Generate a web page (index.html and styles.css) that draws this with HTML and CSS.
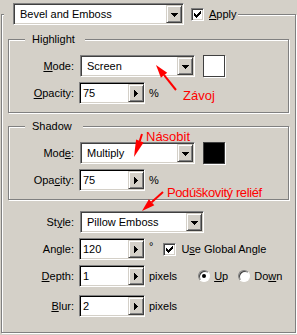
FILE: index.html
```html
<!DOCTYPE html>
<html lang="cs">
<head>
    <meta charset="UTF-8">
    <meta name="viewport" content="width=device-width, initial-scale=1.0">
    <title>Bevel and Emboss</title>
    <link rel="stylesheet" href="styles.css">
</head>
<body>
    <fieldset class="panel">
        <legend class="panel-head">
            <div class="combo combo-effect">
                <span class="combo-text">Bevel and Emboss</span>
                <span class="drop-btn"><svg width="7" height="4" viewBox="0 0 7 4"><path d="M0 0h7v1h-1v1h-1v1h-1v1h-1v-1h-1v-1h-1v-1h-1z"/></svg></span>
            </div>
            <label class="check check-apply">
                <span class="check-box"><svg width="7" height="7" viewBox="0 0 7 7"><path d="M0 2h1v3H0zM1 3h1v3H1zM2 4h1v3H2zM3 3h1v3H3zM4 2h1v3H4zM5 1h1v3H5zM6 0h1v3H6z"/></svg></span>
                <span><u>A</u>pply</span>
            </label>
        </legend>

        <fieldset class="group">
            <legend class="group-title">Highlight</legend>
            <div class="row">
                <span class="label"><u>M</u>ode:</span>
                <div class="combo combo-mode">
                    <span class="combo-text">Screen</span>
                    <span class="drop-btn"><svg width="7" height="4" viewBox="0 0 7 4"><path d="M0 0h7v1h-1v1h-1v1h-1v1h-1v-1h-1v-1h-1v-1h-1z"/></svg></span>
                </div>
                <span class="swatch swatch-white"></span>
            </div>
            <div class="row">
                <span class="label"><u>O</u>pacity:</span>
                <div class="spin">
                    <span class="spin-text">75</span>
                    <span class="spin-btn"><svg width="4" height="7" viewBox="0 0 4 7"><path d="M0 0h1v1h1v1h1v1h1v1h-1v1h-1v1h-1v1H0z"/></svg></span>
                </div>
                <span class="unit">%</span>
            </div>
        </fieldset>

        <fieldset class="group group-shadow">
            <legend class="group-title group-title-shadow">Shadow</legend>
            <div class="row">
                <span class="label">Mod<u>e</u>:</span>
                <div class="combo combo-mode">
                    <span class="combo-text">Multiply</span>
                    <span class="drop-btn"><svg width="7" height="4" viewBox="0 0 7 4"><path d="M0 0h7v1h-1v1h-1v1h-1v1h-1v-1h-1v-1h-1v-1h-1z"/></svg></span>
                </div>
                <span class="swatch swatch-black"></span>
            </div>
            <div class="row">
                <span class="label">Opa<u>c</u>ity:</span>
                <div class="spin">
                    <span class="spin-text">75</span>
                    <span class="spin-btn"><svg width="4" height="7" viewBox="0 0 4 7"><path d="M0 0h1v1h1v1h1v1h1v1h-1v1h-1v1h-1v1H0z"/></svg></span>
                </div>
                <span class="unit">%</span>
            </div>
        </fieldset>

        <div class="row row-style">
            <span class="label">St<u>y</u>le:</span>
            <div class="combo combo-style">
                <span class="combo-text">Pillow Emboss</span>
                <span class="drop-btn"><svg width="7" height="4" viewBox="0 0 7 4"><path d="M0 0h7v1h-1v1h-1v1h-1v1h-1v-1h-1v-1h-1v-1h-1z"/></svg></span>
            </div>
        </div>
        <div class="row">
            <span class="label">Angle:</span>
            <div class="spin">
                <span class="spin-text">120</span>
                <span class="spin-btn"><svg width="4" height="7" viewBox="0 0 4 7"><path d="M0 0h1v1h1v1h1v1h1v1h-1v1h-1v1h-1v1H0z"/></svg></span>
            </div>
            <span class="unit deg">&deg;</span>
            <label class="check check-global">
                <span class="check-box"><svg width="7" height="7" viewBox="0 0 7 7"><path d="M0 2h1v3H0zM1 3h1v3H1zM2 4h1v3H2zM3 3h1v3H3zM4 2h1v3H4zM5 1h1v3H5zM6 0h1v3H6z"/></svg></span>
                <span>U<u>s</u>e Global Angle</span>
            </label>
        </div>
        <div class="row">
            <span class="label"><u>D</u>epth:</span>
            <div class="spin">
                <span class="spin-text">1</span>
                <span class="spin-btn"><svg width="4" height="7" viewBox="0 0 4 7"><path d="M0 0h1v1h1v1h1v1h1v1h-1v1h-1v1h-1v1H0z"/></svg></span>
            </div>
            <span class="unit">pixels</span>
            <label class="radio radio-up"><span class="radio-dot on"></span><span><u>U</u>p</span></label>
            <label class="radio radio-down"><span class="radio-dot"></span><span>Do<u>w</u>n</span></label>
        </div>
        <div class="row row-blur">
            <span class="label"><u>B</u>lur:</span>
            <div class="spin">
                <span class="spin-text">2</span>
                <span class="spin-btn"><svg width="4" height="7" viewBox="0 0 4 7"><path d="M0 0h1v1h1v1h1v1h1v1h-1v1h-1v1h-1v1H0z"/></svg></span>
            </div>
            <span class="unit">pixels</span>
        </div>
    </fieldset>

    <!-- red notes drawn over the dialog -->
    <svg class="arrows" width="297" height="335" viewBox="0 0 297 335">
        <line x1="164.1" y1="75.2" x2="176" y2="90" />
        <polygon points="156,65 167.2,72.7 160.9,77.7" />
        <line x1="139.8" y1="141" x2="142" y2="134" />
        <polygon points="134,157 143.6,142.4 136.1,139.6" />
        <line x1="151.6" y1="202.3" x2="163" y2="192" />
        <polygon points="142,211 154.3,205.3 148.9,199.3" />
    </svg>
    <span class="note note-zavoj">Závoj</span>
    <span class="note note-nasobit">Násobit</span>
    <span class="note note-relief">Podúškovitý reliéf</span>
</body>
</html>
```

FILE: styles.css
```css
* { box-sizing: border-box; }
body { margin: 0; width: 297px; height: 335px; overflow: hidden; position: relative; background: #d4d0c8; color: #000; font: 11px "Liberation Sans", Arial, sans-serif; }
u { text-decoration-thickness: 1px; text-underline-offset: 1px; }

.panel { margin: 3px 1px 0; padding: 8px 6px 15px; min-width: 0; border: 1px solid #808080; box-shadow: 1px 1px 0 #fff, inset 1px 1px 0 #fff; }
.panel-head { display: flex; align-items: center; margin-left: -4px; padding: 0 1px 0 9px; background: #d4d0c8; }

.group { margin: 0; padding: 9px 0 8px; min-width: 0; border: 1px solid #808080; box-shadow: 1px 1px 0 #fff, inset 1px 1px 0 #fff; }
.group-shadow { margin-top: 7px; }
.group-title { margin-left: 16px; padding: 0 10px 0 7px; line-height: 13px; background: #d4d0c8; }
.group-title-shadow { padding-right: 11px; }

.row { display: flex; align-items: center; height: 22px; }
.row + .row { margin-top: 5px; }
.row-style { margin-top: 11px; }
.row + .row-blur { margin-top: 8px; }
.label { width: 66px; margin-right: 5px; text-align: right; white-space: nowrap; }
.group .label { width: 65px; }

.combo { display: flex; height: 22px; padding: 1px; background: #fff; border: 1px solid; border-color: #808080 #fff #fff #808080; box-shadow: inset 1px 1px 0 #404040, inset -1px -1px 0 #d4d0c8; }
.combo-effect { width: 171px; }
.combo-mode { width: 115px; margin-left: 1px; }
.combo-style { width: 124px; margin-left: 1px; }
.combo-text { flex: 1; padding-left: 5px; line-height: 18px; white-space: nowrap; }
.drop-btn, .spin-btn { display: flex; align-items: center; justify-content: center; width: 16px; background: #d4d0c8; border: 1px solid; border-color: #d4d0c8 #404040 #404040 #d4d0c8; box-shadow: inset 1px 1px 0 #fff, inset -1px -1px 0 #808080; }
.drop-btn svg { margin-top: 1px; }

.spin { display: flex; width: 66px; height: 22px; padding: 1px; background: #fff; border: 1px solid; border-color: #808080 #fff #fff #808080; box-shadow: inset 1px 1px 0 #000, inset -1px -1px 0 #d4d0c8; }
.spin-text { flex: 1; padding-left: 2px; line-height: 18px; }
.spin-btn { margin-right: -1px; }

.unit { margin-left: 4px; }
.deg { align-self: flex-start; margin-top: 2px; }

.swatch { width: 22px; height: 22px; margin-left: 8px; border: 1px solid #404040; box-shadow: 1px 1px 0 #fff; }
.swatch-white { background: #fff; }
.swatch-black { background: #000; }

.check { display: flex; align-items: center; gap: 5px; }
.check-apply { margin-left: 7px; }
.check-global { margin-left: 10px; }
.check-box { display: flex; align-items: center; justify-content: center; width: 13px; height: 13px; background: #fff; border: 1px solid; border-color: #808080 #fff #fff #808080; box-shadow: inset 1px 1px 0 #404040, inset -1px -1px 0 #d4d0c8; }

.radio { display: flex; align-items: center; gap: 4px; }
.radio-up { margin-left: 21px; }
.radio-down { margin-left: 10px; }
.radio-dot { display: flex; align-items: center; justify-content: center; width: 12px; height: 12px; border-radius: 50%; background: #fff; border: 1px solid; border-color: #808080 #fff #fff #808080; box-shadow: inset 1px 1px 0 #404040; }
.radio-dot.on::after { content: ""; width: 4px; height: 4px; border-radius: 50%; background: #000; }

.arrows { position: absolute; top: 0; left: 0; pointer-events: none; }
.arrows line { stroke: #f00; stroke-width: 2; }
.arrows polygon { fill: #f00; }
.note { position: absolute; color: #f00; font-size: 13px; line-height: 15px; white-space: nowrap; }
.note-zavoj { left: 183px; top: 88px; }
.note-nasobit { left: 146px; top: 129px; }
.note-relief { left: 167px; top: 185px; letter-spacing: -0.4px; }
```
